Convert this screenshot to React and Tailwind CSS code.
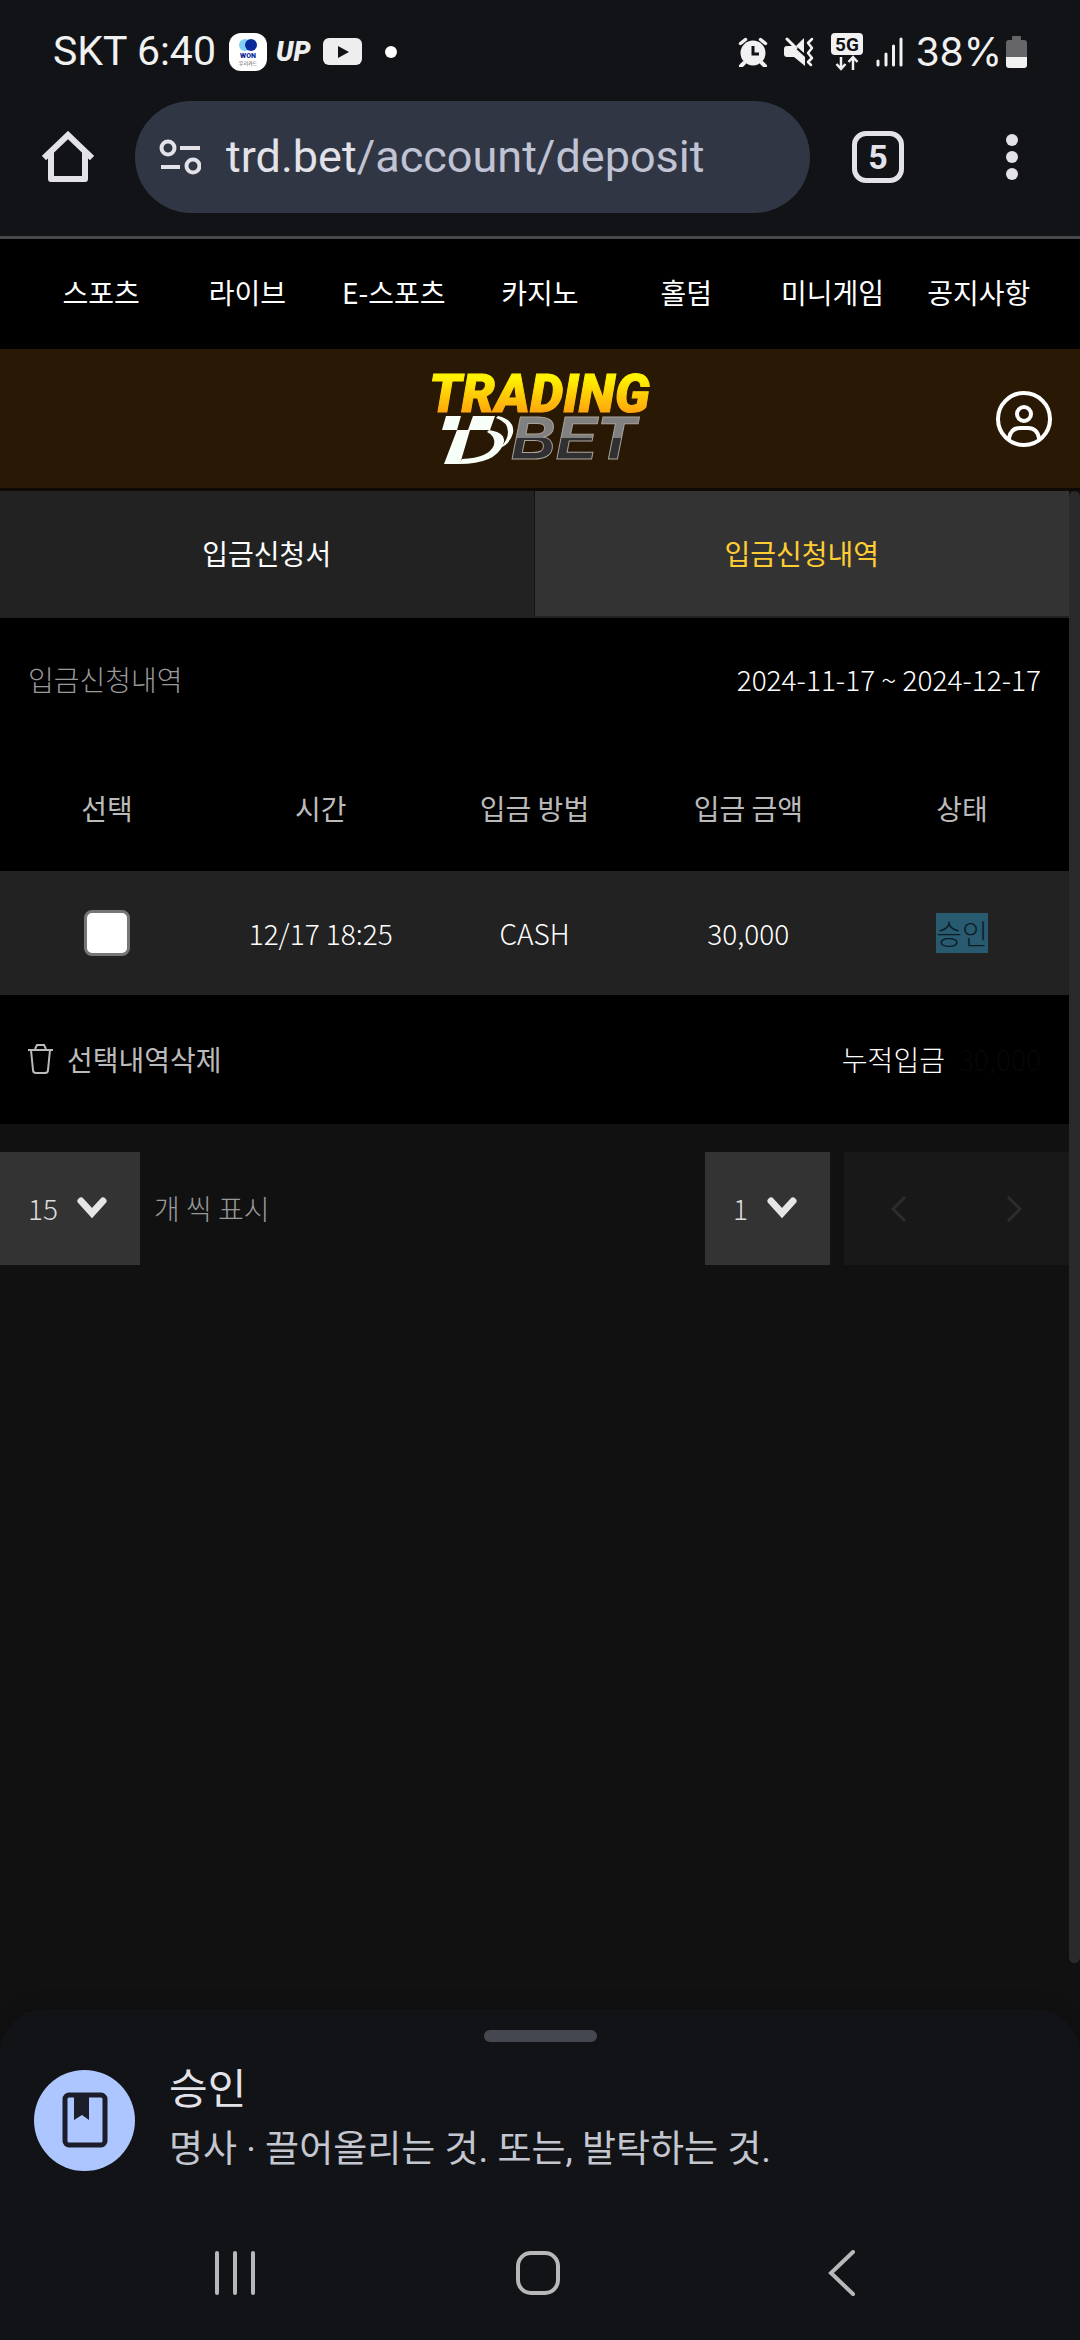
import React from 'react'

const menus = ['스포츠', '라이브', 'E-스포츠', '카지노', '홀덤', '미니게임', '공지사항']

const columns = ['선택', '시간', '입금 방법', '입금 금액', '상태']

const deposits = [
  { id: 1, time: '12/17 18:25', method: 'CASH', amount: '30,000', status: '승인' },
]

const StatusBar = () => {
  return (
    <div className="flex h-[101px] items-center justify-between pl-[53px] pr-[53px] pt-0.5 font-['Roboto','Noto_Sans_CJK_KR',sans-serif] text-[41px] leading-none text-[#f1f1f1]">
      <div className="flex items-center">
        <span className="w-[176px] whitespace-nowrap">SKT 6:40</span>
        <svg className="h-[40px] w-[156px]" viewBox="0 0 156 40" role="img" aria-label="알림">
          <rect x="0" y="1" width="38" height="38" rx="12" fill="#fff" />
          <circle cx="16" cy="13" r="6" fill="#7fd0f5" />
          <circle cx="22" cy="13" r="6" fill="#0a2a9c" />
          <text x="19" y="26" textAnchor="middle" fontSize="7" fontWeight="900" fill="#0a2a9c">WON</text>
          <text x="19" y="33" textAnchor="middle" fontSize="5" fill="#444">우리카드</text>
          <text x="47" y="29" fontSize="27" fontWeight="900" fontStyle="italic" fill="#eee">UP</text>
          <rect x="94" y="6" width="39" height="27" rx="6" fill="#eee" />
          <path d="M109 14v12l11-6z" fill="#111216" />
        </svg>
        <span className="h-3 w-3 rounded-full bg-white" />
      </div>
      <div className="flex items-center">
        <svg className="mr-[16px] h-[30px] w-[30px]" viewBox="0 0 30 30" aria-hidden="true">
          <circle cx="15" cy="16" r="12.500" fill="#f1f1f1" />
          <path d="M6 26l-3 3M24 26l3 3" stroke="#f1f1f1" strokeWidth="4" strokeLinecap="round" />
          <path d="M2.500 6.500l5-4M27.500 6.500l-5-4" stroke="#f1f1f1" strokeWidth="3.500" strokeLinecap="round" fill="none" />
          <path d="M15 9v8h6" stroke="#111216" strokeWidth="3" fill="none" />
        </svg>
        <svg className="mr-[16px] h-[30px] w-[30px]" viewBox="0 0 30 30" fill="#f1f1f1" aria-hidden="true">
          <path d="M0 12q0-3 3-3h6l12 11v9L10 20H3q-3 0-3-3z" />
          <path d="M20 1v15l-8-7z" />
          <path d="M3 2l9 9" stroke="#f1f1f1" strokeWidth="3" strokeLinecap="round" />
          <path d="M28 2l-4 4 4 5-4 5 4 5-4 4 3 3" stroke="#f1f1f1" strokeWidth="2.500" fill="none" strokeLinecap="round" strokeLinejoin="round" />
        </svg>
        <svg className="mr-3 h-[38px] w-[34px]" viewBox="0 0 34 38" aria-hidden="true">
          <rect x="1" y="0" width="32" height="22" rx="4" fill="#f1f1f1" />
          <text x="17" y="18" textAnchor="middle" fontSize="19" fontWeight="700" fill="#111216">5G</text>
          <path d="M11 24v12M6.500 31l4.500 5 4.500-5M23 37V25M18.500 29l4.500-5 4.500 5" stroke="#f1f1f1" strokeWidth="2.500" fill="none" />
        </svg>
        <svg className="mr-3 h-[30px] w-[27px]" viewBox="0 0 27 30" stroke="#f1f1f1" strokeWidth="3" strokeLinecap="round" aria-hidden="true">
          <path d="M2 24v4M10 17v11M17.500 9v19M25 2v26" />
        </svg>
        <span className="mr-1 font-['Inter',sans-serif] text-[39px]">38%</span>
        <svg className="h-[32px] w-[21px]" viewBox="0 0 21 32" aria-hidden="true">
          <path d="M6 1q0-1 1-1h7q1 0 1 1v3h3q3 0 3 3v14H0V7q0-3 3-3h3z" fill="#666668" />
          <path d="M0 21h21v8q0 3-3 3H3q-3 0-3-3z" fill="#f1f1f1" />
        </svg>
      </div>
    </div>
  )
}

const AddressBar = () => {
  return (
    <div className="flex items-center border-b-[3px] border-[#47484b] pb-[23px] pl-[42px] pr-[62px] font-['Roboto',sans-serif]">
      <button type="button" aria-label="홈" className="mr-[41px] text-[#e3e2e9]">
        <svg className="h-[52px] w-[52px]" viewBox="0 0 52 52" fill="none" stroke="currentColor" strokeWidth="6" aria-hidden="true">
          <path d="M2 27L26 4l24 23" />
          <path d="M9 21v27h34V21" strokeLinejoin="round" />
        </svg>
      </button>
      <div className="flex h-[112px] min-w-0 flex-1 items-center rounded-full bg-[#303643] pl-[24px] text-[45px]">
        <svg className="mr-[25px] h-[38px] w-[42px] shrink-0" viewBox="0 0 42 38" fill="none" stroke="#e3e2e9" strokeWidth="4" aria-hidden="true">
          <circle cx="9" cy="10" r="6.500" />
          <path d="M21 10h20M2 29h19" />
          <circle cx="34" cy="28" r="6.500" />
        </svg>
        <a href="#deposit" className="whitespace-nowrap text-[#e3e2e9]">
          trd.bet<span className="text-[#c0c3d3]">/account/deposit</span>
        </a>
      </div>
      <button type="button" aria-label="탭 5개" className="ml-[42px] flex h-[52px] w-[52px] items-center justify-center rounded-[14px] border-[5px] border-[#e3e2e9] text-[34px] font-bold leading-none text-[#e3e2e9]">
        5
      </button>
      <button type="button" aria-label="메뉴" className="ml-[102px] flex flex-col gap-[5px]">
        <span className="h-3 w-3 rounded-full bg-[#e3e2e9]" />
        <span className="h-3 w-3 rounded-full bg-[#e3e2e9]" />
        <span className="h-3 w-3 rounded-full bg-[#e3e2e9]" />
      </button>
    </div>
  )
}

const Logo = () => {
  return (
    <svg className="h-[124px] w-[230px]" viewBox="0 -9 230 124" fontStyle="italic" role="img" aria-label="TRADING BET">
      <defs>
        <linearGradient id="gold" gradientUnits="userSpaceOnUse" x1="0" y1="8" x2="0" y2="46">
          <stop offset="0.100" stopColor="#fff200" />
          <stop offset="1" stopColor="#ffa60d" />
        </linearGradient>
        <linearGradient id="steel" gradientUnits="userSpaceOnUse" x1="0" y1="49" x2="0" y2="93">
          <stop offset="0.530" stopColor="#808080" />
          <stop offset="0.530" stopColor="#303032" />
        </linearGradient>
      </defs>
      <text x="4" y="46" fontFamily="Roboto, sans-serif" fontSize="53" fontWeight="900" fill="url(#gold)" stroke="url(#gold)" strokeWidth="1">TRADING</text>
      <text x="86" y="93" fontFamily="Liberation Sans, sans-serif" fontSize="62" fontWeight="700" fill="url(#steel)" stroke="#a8a29a" strokeWidth="1">BET</text>
      <g fill="#f8fff8">
        <path d="M21 50h15l-4 14H17zM48 50h22l-5 14H43zM32 64h13L35 98H19z" />
        <path d="M64 64q19 3 14 15Q70 98 34 98l3-5q27-1 32-14 2-9-7-13z" />
        <path d="M73 50q17 4 15 17-3 11-13 15 8-8 8-16 0-10-12-14z" />
      </g>
    </svg>
  )
}

const Header = () => {
  return (
    <header>
      <nav className="grid h-[110px] grid-cols-7 items-center bg-black px-7 pb-1 text-center text-white">
        {menus.map((menu) => (
          <a key={menu} href="#menu" className="whitespace-nowrap">
            {menu}
          </a>
        ))}
      </nav>
      <div className="grid h-[142px] grid-cols-3 items-center border-b-[3px] border-[#0e0a05] bg-[#291804] px-7">
        <a href="#home" className="col-start-2 justify-self-center">
          <Logo />
        </a>
        <button type="button" aria-label="내 계정" className="justify-self-end">
          <svg className="h-[56px] w-[56px]" viewBox="0 0 56 56" fill="none" stroke="#fff" strokeWidth="4" aria-hidden="true">
            <circle cx="28" cy="28" r="26" />
            <circle cx="28" cy="23" r="7" />
            <path d="M13 49v-2q2-10 11-10h8q9 0 11 10v2" />
          </svg>
        </button>
      </div>
    </header>
  )
}

const Tabs = () => {
  return (
    <div role="tablist" className="grid h-[127px] grid-cols-2 border-b-2 border-[#222]">
      <button type="button" role="tab" aria-selected="false" className="border-r border-[#111] bg-[#222] pb-0.5 text-white">
        입금신청서
      </button>
      <button type="button" role="tab" aria-selected="true" className="bg-[#333] pb-0.5 text-[#ffcc33]">
        입금신청내역
      </button>
    </div>
  )
}

const DepositTable = () => {
  return (
    <table className="w-full table-fixed text-center">
      <thead>
        <tr className="h-[127px] text-[#bbb]">
          {columns.map((column) => (
            <th key={column} scope="col" className="font-normal">
              {column}
            </th>
          ))}
        </tr>
      </thead>
      <tbody>
        {deposits.map((row) => (
          <tr key={row.id} className="h-[124px] bg-[#222] font-light text-white">
            <td>
              <input type="checkbox" aria-label="내역 선택" className="mx-auto block h-[46px] w-[46px] appearance-none rounded-lg border-[3px] border-[#767676] bg-white" />
            </td>
            <td>{row.time}</td>
            <td>{row.method}</td>
            <td>{row.amount}</td>
            <td>
              <span className="bg-[#285a70] text-[#0c1c26]">{row.status}</span>
            </td>
          </tr>
        ))}
      </tbody>
    </table>
  )
}

const PageSelect = ({ label, value, className }) => {
  return (
    <div className={`relative h-[113px] ${className}`}>
      <select aria-label={label} defaultValue={value} className="h-full w-full appearance-none bg-[#333] pb-0.5 pl-7 font-light text-[#ddd]">
        <option>{value}</option>
      </select>
      <svg className="pointer-events-none absolute right-[33px] top-[45px] h-[22px] w-[30px]" viewBox="0 0 30 22" fill="none" stroke="#e6e6e6" strokeWidth="7" aria-hidden="true">
        <path d="M4 4l11 12L26 4" strokeLinecap="round" />
      </svg>
    </div>
  )
}

const Pagination = () => {
  return (
    <div className="mt-7 flex items-center">
      <PageSelect label="표시 개수" value="15" className="w-[140px]" />
      <span className="ml-[14px] pb-0.5 font-light text-[#999]">개 씩 표시</span>
      <PageSelect label="페이지" value="1" className="ml-auto w-[125px]" />
      <div className="ml-[14px] flex h-[113px] w-[225px] items-center justify-between bg-[#181818] px-[47px] text-[#2c2c2c]">
        <button type="button" aria-label="이전">
          <svg className="h-[26px] w-[16px]" viewBox="0 0 16 26" fill="none" stroke="currentColor" strokeWidth="3" aria-hidden="true">
            <path d="M14 1L2 13l12 12" />
          </svg>
        </button>
        <button type="button" aria-label="다음">
          <svg className="h-[26px] w-[16px]" viewBox="0 0 16 26" fill="none" stroke="currentColor" strokeWidth="3" aria-hidden="true">
            <path d="M2 1l12 12L2 25" />
          </svg>
        </button>
      </div>
    </div>
  )
}

const DictionarySheet = () => {
  return (
    <section className="h-[196px] rounded-t-[44px] bg-[#121317] px-[34px] pt-[21px] font-['Roboto','Noto_Sans_CJK_KR',sans-serif] shadow-[0_-4px_20px_rgba(0,0,0,0.1)]">
      <div className="mx-auto h-3 w-[113px] rounded-full bg-[#44474f]" />
      <div className="mt-[18px] flex items-center">
        <div className="mr-[34px] flex h-[101px] w-[101px] shrink-0 items-center justify-center rounded-full bg-[#adc6ff]">
          <svg className="h-[56px] w-[46px]" viewBox="0 0 46 56" aria-hidden="true">
            <rect x="3" y="3" width="40" height="50" rx="4" fill="none" stroke="#1b1e2a" strokeWidth="5" />
            <path d="M12 3h15v25l-7-5-8 5z" fill="#1b1e2a" />
          </svg>
        </div>
        <div className="whitespace-nowrap">
          <h2 className="text-[42px] font-normal leading-[60px] text-[#e3e2e9]">승인</h2>
          <p className="text-[37px] leading-[60px] text-[#c4c6d0]">명사 · 끌어올리는 것. 또는, 발탁하는 것.</p>
        </div>
      </div>
    </section>
  )
}

const SystemNav = () => {
  return (
    <nav className="flex h-[135px] items-center justify-around bg-[#121317] pl-[84px] pr-[86px] text-[#b8b8bb]">
      <button type="button" aria-label="최근 앱">
        <svg className="h-[44px] w-[44px]" viewBox="0 0 44 44" fill="none" stroke="currentColor" strokeWidth="4" strokeLinecap="round" aria-hidden="true">
          <path d="M4 2v40M22 2v40M40 2v40" />
        </svg>
      </button>
      <button type="button" aria-label="홈 화면">
        <svg className="h-[46px] w-[46px]" viewBox="0 0 46 46" fill="none" stroke="currentColor" strokeWidth="4" aria-hidden="true">
          <rect x="3" y="3" width="40" height="40" rx="13" />
        </svg>
      </button>
      <button type="button" aria-label="뒤로">
        <svg className="h-[46px] w-[46px]" viewBox="0 0 46 46" fill="none" stroke="currentColor" strokeWidth="4" strokeLinecap="round" aria-hidden="true">
          <path d="M34 2L12 23l22 21" />
        </svg>
      </button>
    </nav>
  )
}

const App = () => {
  return (
    <div className="flex min-h-screen flex-col bg-[#121317] font-['Noto_Sans_CJK_KR',sans-serif] text-[28px] leading-[42px]">
      <StatusBar />
      <AddressBar />
      <Header />
      <div className="flex flex-1 bg-[#111]">
        <main className="min-w-0 flex-1">
          <Tabs />
          <section className="bg-black">
            <div className="flex h-[126px] items-center justify-between px-7 pb-1 font-light">
              <h1 className="text-[#999]">입금신청내역</h1>
              <span className="text-white">2024-11-17 ~ 2024-12-17</span>
            </div>
            <DepositTable />
            <div className="flex h-[129px] items-center justify-between px-7 pb-0.5">
              <button type="button" className="flex items-center gap-[14px] text-[#bbb]">
                <svg className="h-[30px] w-[25px]" viewBox="0 0 25 30" fill="none" stroke="currentColor" strokeWidth="2" aria-hidden="true">
                  <path d="M0 6h25M7 5l2-4h7l2 4M3 6l2 20q0 3 3 3h9q3 0 3-3l2-20" />
                </svg>
                선택내역삭제
              </button>
              <p className="font-light text-white">
                누적입금 <span className="ml-2 text-[#070707]">30,000</span>
              </p>
            </div>
          </section>
          <Pagination />
        </main>
        <div className="mb-[46px] w-[11px] rounded-full bg-[#2a2a2a]" />
      </div>
      <div className="bg-[#101010]">
        <DictionarySheet />
      </div>
      <SystemNav />
    </div>
  )
}

export default App
